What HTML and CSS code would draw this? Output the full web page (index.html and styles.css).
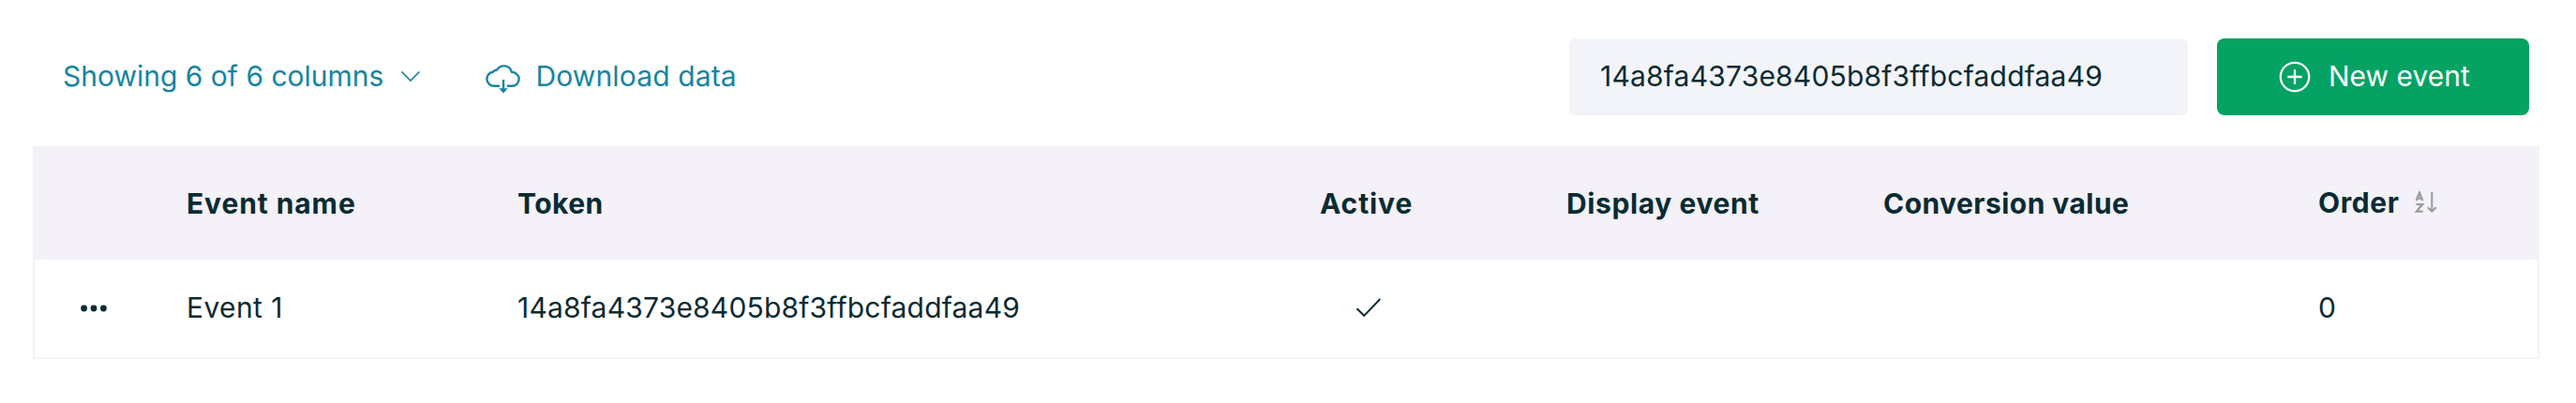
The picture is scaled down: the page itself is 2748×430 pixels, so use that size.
FILE: index.html
```
<!DOCTYPE html>
<html lang="en">
<head>
  <meta charset="UTF-8">
  <title>Events</title>
  <link rel="stylesheet" href="styles.css">
</head>
<body>
  <div class="toolbar">
    <button class="link columns">
      <span>Showing 6 of 6 columns</span>
      <svg class="chevron" width="22" height="14" viewBox="0 0 22 14"><path d="M1.5 1.5 11 11l9.5-9.5"/></svg>
    </button>
    <button class="link download">
      <svg class="cloud" width="38" height="32" viewBox="0 0 38 32">
        <path d="M15 22.8H9.5a7.6 7.6 0 0 1-1.6-15.1 5.5 5.5 0 0 1 4.3-2.2c3.4-5.8 13.4-5.8 15.6 2.2 3.2.2 7.9 3 7.9 7.4 0 4.4-3.4 7.7-7.7 7.7H23"/>
        <path d="M19 16v11"/>
        <path class="fill" d="M14.2 25.2h9.6L19 30.6z"/>
      </svg>
      <span>Download data</span>
    </button>
    <input class="search" type="text" value="14a8fa4373e8405b8f3ffbcfaddfaa49">
    <button class="new-event">
      <svg width="34" height="34" viewBox="0 0 34 34"><circle cx="17" cy="17" r="15.2"/><path d="M17 9.3v15.4M9.3 17h15.4"/></svg>
      <span>New event</span>
    </button>
  </div>

  <table class="events">
    <colgroup>
      <col class="col-actions">
      <col class="col-name">
      <col class="col-token">
      <col class="col-active">
      <col class="col-display">
      <col class="col-value">
      <col class="col-order">
    </colgroup>
    <thead>
      <tr>
        <th></th>
        <th class="name">Event name</th>
        <th class="short">Token</th>
        <th class="name">Active</th>
        <th>Display event</th>
        <th class="short">Conversion value</th>
        <th>
          <div class="sort">
            <span>Order</span>
            <svg width="26" height="24" viewBox="0 0 26 24">
              <path d="M1.6 10.2 5 1.5l3.4 8.7M2.8 7.6h4.4M1.6 14h6.6L1.8 21.7h6.8"/>
              <path class="arrow" d="M18.3.8v20.6M13.8 17.2l4.5 4.4 4.5-4.4"/>
            </svg>
          </div>
        </th>
      </tr>
    </thead>
    <tbody>
      <tr>
        <td class="actions">
          <svg width="28" height="8" viewBox="0 0 28 8"><circle cx="3.6" cy="4" r="3.4"/><circle cx="14" cy="4" r="3.4"/><circle cx="24.4" cy="4" r="3.4"/></svg>
        </td>
        <td class="name">Event 1</td>
        <td class="token">14a8fa4373e8405b8f3ffbcfaddfaa49</td>
        <td class="active">
          <svg width="28" height="22" viewBox="0 0 28 22"><path d="M1.5 12.2 9.2 19.8 26.3 2"/></svg>
        </td>
        <td></td>
        <td></td>
        <td>0</td>
      </tr>
    </tbody>
  </table>
</body>
</html>
```
FILE: styles.css
```
* {
  box-sizing: border-box;
}
body {
  margin: 0;
  padding: 41px 39px 0 35px;
  background: #fff;
  color: #0a2b33;
  font-family: Inter, Roboto, sans-serif;
  font-size: 30px;
  line-height: 36px;
}
button,
input {
  border: none;
  font: inherit;
  color: inherit;
}
button {
  display: flex;
  align-items: center;
  padding: 0;
  background: none;
  cursor: pointer;
}
button span {
  padding-bottom: 2px;
}
svg {
  display: block;
  fill: none;
  stroke: currentColor;
}

/* Toolbar */
.toolbar {
  display: flex;
  align-items: center;
  height: 82px;
  margin-bottom: 33px;
  padding: 0 11px 0 32px;
}
.link {
  color: #1585a1;
}
.columns {
  gap: 18px;
}
.chevron {
  stroke-width: 1.7;
}
.download {
  gap: 15px;
  margin-left: 69px;
  letter-spacing: 0.14px;
}
.cloud {
  margin-top: 6px;
  stroke-width: 2.4;
}
.cloud .fill {
  fill: currentColor;
  stroke: none;
}
.search {
  width: 660px;
  height: 82px;
  margin-left: auto;
  padding: 0 32px 2px 33px;
  border-radius: 7px;
  background: #f3f4f9;
  letter-spacing: 0.2px;
}
.new-event {
  gap: 19px;
  width: 333px;
  height: 82px;
  margin-left: 31px;
  padding-left: 66px;
  border-radius: 8px;
  background: #04a263;
  color: #fff;
}
.new-event svg {
  stroke-width: 2.3;
}

/* Events table */
.events {
  width: 2674px;
  table-layout: fixed;
  border-spacing: 0;
  border: 2px solid #f3f2f9;
  border-top: none;
}
.col-actions { width: 137px; }
.col-name { width: 353px; }
.col-token { width: 856px; }
.col-active { width: 263px; }
.col-display { width: 338px; }
.col-value { width: 464px; }
th,
td {
  padding: 0 0 0 25px;
  text-align: left;
  vertical-align: middle;
}
th {
  height: 121px;
  background: #f4f1f9;
  font-weight: 700;
  letter-spacing: 0.6px;
}
th.name {
  letter-spacing: 0.9px;
}
th.short {
  letter-spacing: 0.45px;
}
td {
  height: 104px;
  padding-bottom: 2px;
}
td.name {
  letter-spacing: 0.4px;
}
.token {
  letter-spacing: 0.2px;
}
.sort {
  display: flex;
  align-items: center;
  gap: 16px;
  padding-bottom: 1px;
}
.sort svg {
  color: #9a999e;
  stroke-width: 2.2;
}
.sort .arrow {
  stroke-width: 2;
}
.actions {
  padding: 0 0 0 49px;
}
.actions svg {
  fill: currentColor;
  stroke: none;
}
.active {
  padding-left: 63px;
}
.active svg {
  stroke-width: 1.9;
}
```
